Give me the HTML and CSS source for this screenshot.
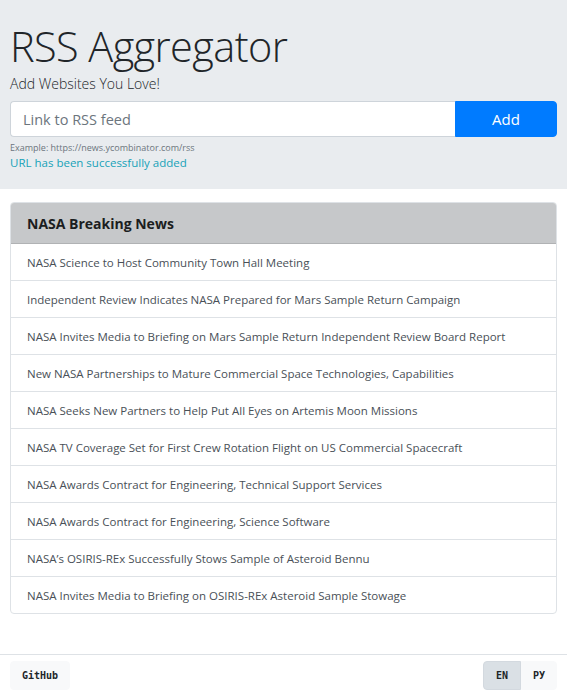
FILE: index.html
```html
<!DOCTYPE html>
<html lang="en">
<head>
<meta charset="utf-8">
<title>RSS Aggregator</title>
<link rel="stylesheet" href="styles.css">
</head>
<body>
<header class="jumbo">
  <h1 class="title">RSS Aggregator</h1>
  <p class="lead">Add Websites You Love!</p>
  <form class="input-group">
    <input class="url-input" type="text" placeholder="Link to RSS feed">
    <button class="add-btn" type="button">Add</button>
  </form>
  <p class="example">Example: https://news.ycombinator.com/rss</p>
  <p class="feedback">URL has been successfully added</p>
</header>
<main class="content">
  <section class="card">
    <h2 class="card-header">NASA Breaking News</h2>
    <ul class="list">
      <li class="item">NASA Science to Host Community Town Hall Meeting</li>
      <li class="item">Independent Review Indicates NASA Prepared for Mars Sample Return Campaign</li>
      <li class="item">NASA Invites Media to Briefing on Mars Sample Return Independent Review Board Report</li>
      <li class="item">New NASA Partnerships to Mature Commercial Space Technologies, Capabilities</li>
      <li class="item">NASA Seeks New Partners to Help Put All Eyes on Artemis Moon Missions</li>
      <li class="item">NASA TV Coverage Set for First Crew Rotation Flight on US Commercial Spacecraft</li>
      <li class="item">NASA Awards Contract for Engineering, Technical Support Services</li>
      <li class="item">NASA Awards Contract for Engineering, Science Software</li>
      <li class="item">NASA’s OSIRIS-REx Successfully Stows Sample of Asteroid Bennu</li>
      <li class="item">NASA Invites Media to Briefing on OSIRIS-REx Asteroid Sample Stowage</li>
    </ul>
  </section>
</main>
<footer class="footer">
  <a class="btn-light" href="#">GitHub</a>
  <div class="lang-group">
    <button class="btn-light lang active" type="button">EN</button>
    <button class="btn-light lang" type="button">РУ</button>
  </div>
</footer>
</body>
</html>
```

FILE: styles.css
```css
* { box-sizing: border-box; }
html, body { margin: 0; padding: 0; }
body {
  font-family: "Open Sans", "Noto Sans", sans-serif;
  color: #212529;
  background: #fff;
  width: 567px;
}
.jumbo {
  background: #e9ecef;
  padding: 21px 10px 0 10px;
  height: 189px;
}
.title {
  margin: 0;
  font-weight: 300;
  font-size: 41.5px;
  line-height: 50px;
  letter-spacing: -0.6px;
  color: #212529;
}
.lead {
  margin: 3px 0 7px;
  font-size: 14px;
  font-weight: 300;
  line-height: 20px;
}
.input-group {
  display: flex;
  height: 36px;
  margin: 0;
}
.url-input {
  flex: 1;
  min-width: 0;
  border: 1px solid #ced4da;
  border-right: none;
  border-radius: 4px 0 0 4px;
  padding: 0 12px;
  font-family: inherit;
  font-size: 14.5px;
  color: #495057;
  background: #fff;
}
.url-input::placeholder { color: #6c757d; }
.add-btn {
  width: 102px;
  border: 1px solid #007bff;
  background: #007bff;
  color: #fff;
  border-radius: 0 4px 4px 0;
  font-family: inherit;
  font-size: 15px;
  padding: 0;
}
.example {
  margin: 4px 0 0;
  font-size: 9px;
  line-height: 13px;
  color: #6c757d;
}
.feedback {
  margin: 0;
  font-size: 11.5px;
  line-height: 17px;
  color: #17a2b8;
}
.content {
  padding: 13px 10px 0 10px;
  height: 465px;
}
.card {
  border: 1px solid #dee2e6;
  border-radius: 4px;
  overflow: hidden;
}
.card-header {
  margin: 0;
  background: #c6c8ca;
  border-bottom: 1px solid #b0b2b4;
  height: 41px;
  padding: 0 16px;
  display: flex;
  align-items: center;
  font-size: 14px;
  font-weight: 700;
  color: #1b1e21;
}
.list {
  list-style: none;
  margin: 0;
  padding: 0;
}
.item {
  height: 37px;
  padding: 0 16px;
  display: flex;
  align-items: center;
  font-size: 11.5px;
  color: #495057;
  border-bottom: 1px solid #dee2e6;
  white-space: nowrap;
}
.item:last-child { border-bottom: none; height: 36px; }
.footer {
  border-top: 1px solid #dee2e6;
  padding: 6px 10px 0 10px;
  height: 42px;
  display: flex;
  justify-content: space-between;
  align-items: flex-start;
}
.btn-light {
  display: inline-flex;
  align-items: center;
  justify-content: center;
  height: 29px;
  background: #f8f9fa;
  border: 1px solid #f8f9fa;
  border-radius: 4px;
  font-family: "DejaVu Sans Mono", monospace;
  font-size: 10px;
  font-weight: 700;
  color: #212529;
  text-decoration: none;
  padding: 0 11px;
}
.lang-group { display: flex; }
.lang { width: 37px; padding: 0; border-radius: 0; }
.lang:first-child { border-radius: 4px 0 0 4px; width: 38px; }
.lang:last-child { border-radius: 0 4px 4px 0; width: 36px; }
.lang.active { background: #dae0e5; border-color: #d3d9df; }
```
